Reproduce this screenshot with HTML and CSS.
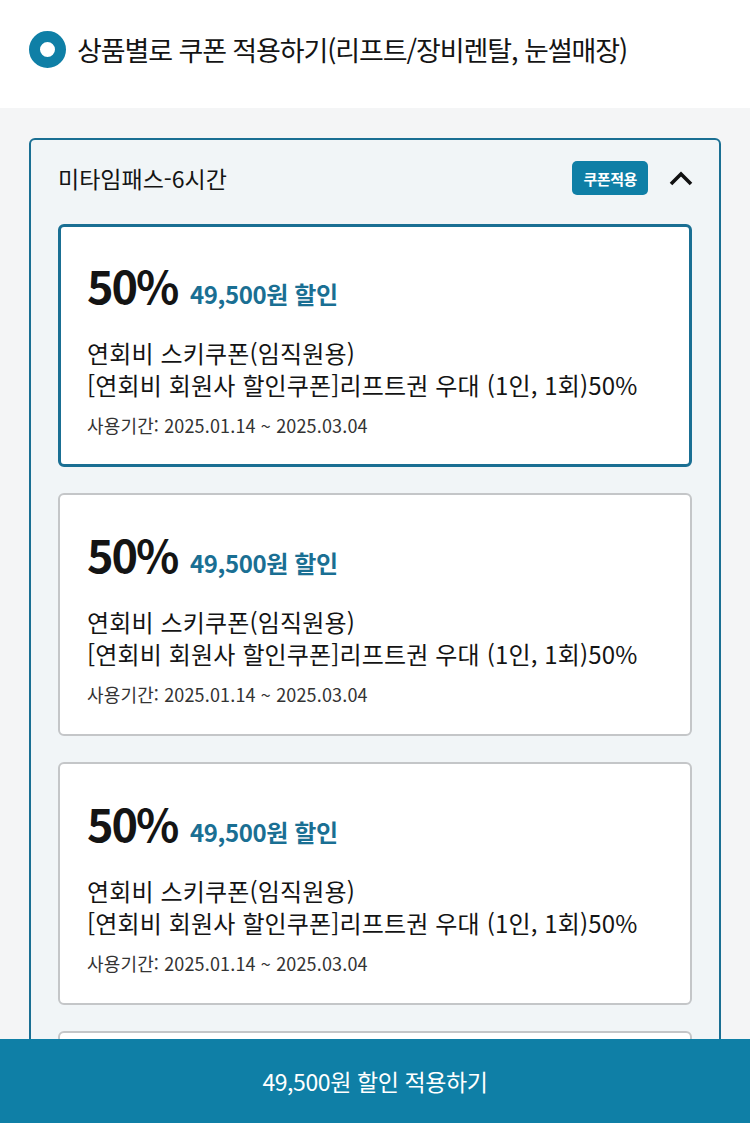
FILE: index.html
```html
<!DOCTYPE html>
<html lang="ko">
<head>
    <meta charset="UTF-8">
    <meta name="viewport" content="width=device-width, initial-scale=1.0">
    <title>쿠폰 적용</title>
    <link rel="stylesheet" href="styles.css">
</head>
<body>
    <div class="option">
        <span class="radio"></span>
        <span class="option-label">상품별로 쿠폰 적용하기(리프트/장비렌탈, 눈썰매장)</span>
    </div>

    <div class="content">
        <div class="product">
            <div class="product-head">
                <div class="product-name">미타임패스-6시간</div>
                <button class="apply-badge">쿠폰적용</button>
                <svg class="toggle" width="26" height="26" viewBox="0 0 26 26">
                    <path d="M3 19 L13 9 L23 19" fill="none" stroke="#111" stroke-width="3.6"/>
                </svg>
            </div>

            <div class="coupon-list">
                <div class="coupon selected">
                    <div class="coupon-rate">50% <span class="coupon-amount">49,500원 할인</span></div>
                    <div class="coupon-title">연회비 스키쿠폰(임직원용)</div>
                    <div class="coupon-title">[연회비 회원사 할인쿠폰]리프트권 우대 (1인, 1회)50%</div>
                    <div class="coupon-date">사용기간: 2025.01.14 ~ 2025.03.04</div>
                </div>
                <div class="coupon">
                    <div class="coupon-rate">50% <span class="coupon-amount">49,500원 할인</span></div>
                    <div class="coupon-title">연회비 스키쿠폰(임직원용)</div>
                    <div class="coupon-title">[연회비 회원사 할인쿠폰]리프트권 우대 (1인, 1회)50%</div>
                    <div class="coupon-date">사용기간: 2025.01.14 ~ 2025.03.04</div>
                </div>
                <div class="coupon">
                    <div class="coupon-rate">50% <span class="coupon-amount">49,500원 할인</span></div>
                    <div class="coupon-title">연회비 스키쿠폰(임직원용)</div>
                    <div class="coupon-title">[연회비 회원사 할인쿠폰]리프트권 우대 (1인, 1회)50%</div>
                    <div class="coupon-date">사용기간: 2025.01.14 ~ 2025.03.04</div>
                </div>
                <!-- next coupon, only its top edge shows above the bar -->
                <div class="coupon"></div>
            </div>
        </div>
    </div>

    <button class="submit-bar">49,500원 할인 적용하기</button>
</body>
</html>
```

FILE: styles.css
```css
:root {
    --brand: #0f7fa6;
    --brand-dark: #1a6f93;
    --text: #141414;
    --line: #c4c6c8;
}

* {
    box-sizing: border-box;
}

body {
    margin: 0;
    height: 1123px;
    overflow: hidden;
    display: flex;
    flex-direction: column;
    font-family: "Noto Sans CJK KR", "Noto Sans", sans-serif;
    color: var(--text);
    background: #f4f5f6;
}

.option {
    flex: none;
    display: flex;
    align-items: center;
    gap: 11px;
    height: 108px;
    padding: 0 0 10px 29px;
    background: #fff;
}

.radio {
    width: 37px;
    height: 37px;
    border-radius: 50%;
    border: 11px solid var(--brand);
    background: #fff;
}

.option-label {
    font-size: 27px;
    letter-spacing: -1.1px;
}

.content {
    flex: 1;
    overflow: hidden;
    padding: 30px 29px 0 29px;
}

.product {
    border: 2px solid var(--brand-dark);
    border-radius: 6px;
    background: #f1f5f7;
    padding: 0 27px 40px 27px;
}

.product-head {
    display: flex;
    align-items: center;
    height: 84px;
    padding-bottom: 8px;
}

.product-name {
    flex: 1;
    font-size: 23px;
    letter-spacing: 0;
}

.apply-badge {
    border: 0;
    border-radius: 5px;
    background: var(--brand);
    color: #fff;
    font-family: inherit;
    font-size: 15px;
    font-weight: 700;
    letter-spacing: -0.4px;
    height: 34px;
    padding: 0 11px;
    margin-right: 20px;
}

.toggle {
    margin-right: -2px;
}

.coupon-list {
    display: flex;
    flex-direction: column;
    gap: 26px;
}

.coupon {
    height: 243px;
    background: #fff;
    border: 2px solid var(--line);
    border-radius: 6px;
    padding: 32px 28px 0 27px;
}

.coupon.selected {
    border: 3px solid var(--brand-dark);
    padding: 31px 27px 0 26px;
}

.coupon-rate {
    font-size: 45px;
    font-weight: 700;
    letter-spacing: -2px;
    line-height: 54px;
    margin-bottom: 16px;
}

.coupon-amount {
    font-size: 24px;
    color: var(--brand-dark);
    letter-spacing: -0.4px;
    margin-left: 2px;
}

.coupon-title {
    font-size: 24px;
    letter-spacing: 0.15px;
    line-height: 32px;
}

.coupon-date {
    font-size: 18px;
    letter-spacing: 0.15px;
    color: #333;
    margin-top: 11px;
}

.submit-bar {
    flex: none;
    height: 84px;
    border: 0;
    background: var(--brand);
    color: #fff;
    font-family: inherit;
    font-size: 23px;
    letter-spacing: -0.4px;
}
```
